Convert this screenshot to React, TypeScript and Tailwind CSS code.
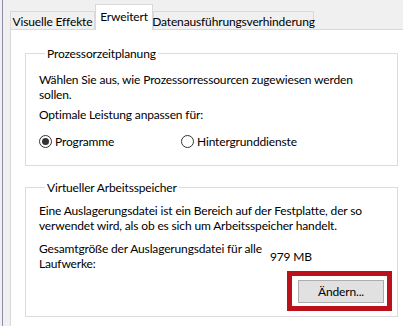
import React from "react";

// Windows "Leistungsoptionen" dialog, tab "Erweitert"

const font = { fontFamily: '"Segoe UI", Lato, "Noto Sans", "Liberation Sans", sans-serif' };

function Tab({ label, width, active }: { label: string; width: string; active?: boolean }) {
  if (active) {
    return (
      <div
        className={`${width} relative z-10 -mb-px flex h-[26px] items-start justify-center whitespace-nowrap border border-b-0 border-[#d9d9d9] bg-white pt-[4px] text-[12px] leading-[15px] text-black`}
      >
        {label}
      </div>
    );
  }
  return (
    <div
      className={`${width} flex h-[18px] items-start justify-center whitespace-nowrap border border-b-0 border-[#d9d9d9] bg-[#f0f0f0] pt-[2px] text-[12px] leading-[15px] text-black`}
    >
      {label}
    </div>
  );
}

function Radio({ label, checked }: { label: string; checked?: boolean }) {
  return (
    <div className="flex items-center gap-[3px]">
      <span className="flex h-[13px] w-[13px] items-center justify-center rounded-full border border-[#333333] bg-white">
        {checked && <span className="h-[7px] w-[7px] rounded-full bg-[#333333]" />}
      </span>
      <span>{label}</span>
    </div>
  );
}

export default function App() {
  return (
    <div
      style={font}
      className="flex h-[326px] w-[403px] overflow-hidden bg-[#f0f0f0] text-[12px] leading-[15px] tracking-[-0.15px] text-black"
    >
      {/*left edge of the window behind*/}
      <div className="flex w-[10px] shrink-0">
        <div className="ml-[2px] w-px bg-[#8f89aa]" />
      </div>

      <div className="flex flex-1 flex-col">
        {/*tabs*/}
        <div className="flex h-[29px] shrink-0 items-end">
          <Tab label="Visuelle Effekte" width="w-[85px]" />
          <Tab label="Erweitert" width="w-[58px]" active />
          <Tab label="Datenausführungsverhinderung" width="w-[161px]" />
        </div>

        {/*panel*/}
        <div className="flex flex-1 flex-col border-l border-t border-[#d9d9d9] bg-white pl-[14px] pr-[5px]">
          <fieldset className="mt-[16px] border border-[#dcdcdc] pb-[16px] pl-[13px] pr-[8px]">
            <legend className="ml-[6px] px-[2px]">Prozessorzeitplanung</legend>
            <p className="mt-[11px] whitespace-nowrap">
              Wählen Sie aus, wie Prozessorressourcen zugewiesen werden
              <br />
              sollen.
            </p>
            <p className="mt-[5px]">Optimale Leistung anpassen für:</p>
            <div className="mt-[12px] flex">
              <div className="w-[142px]">
                <Radio label="Programme" checked />
              </div>
              <Radio label="Hintergrunddienste" />
            </div>
          </fieldset>

          <fieldset className="mt-[14px] border border-[#dcdcdc] pb-[5px] pl-[13px] pr-[5px]">
            <legend className="ml-[6px] px-[2px]">Virtueller Arbeitsspeicher</legend>
            <p className="mt-[8px] whitespace-nowrap">
              Eine Auslagerungsdatei ist ein Bereich auf der Festplatte, der so
              <br />
              verwendet wird, als ob es sich um Arbeitsspeicher handelt.
            </p>
            <div className="mt-[8px] flex items-center">
              <p className="w-[231px] whitespace-nowrap">
                Gesamtgröße der Auslagerungsdatei für alle
                <br />
                Laufwerke:
              </p>
              <span>979 MB</span>
            </div>
            <div className="flex justify-end">
              <div className="border-[5px] border-[#bb111a] pb-[3px] pl-[6px] pr-[3px] pt-[4px]">
                <button className="flex h-[23px] w-[86px] items-center justify-center border border-[#adadad] bg-[#e1e1e1] text-[12px]">
                  Ändern...
                </button>
              </div>
            </div>
          </fieldset>
        </div>
      </div>
    </div>
  );
}
